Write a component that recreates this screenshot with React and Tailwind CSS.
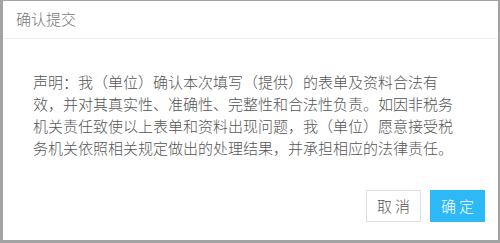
import React from "react";

const font = { fontFamily: '"Noto Sans CJK SC", "Noto Sans", sans-serif' };

export default function App() {
  return (
    <div
      className="w-[500px] h-[243px] bg-[#a3a3a3] pt-[1px] pl-[3px] pr-[2px] pb-[3px]"
      style={font}
    >
      <div className="h-full bg-white flex flex-col">
        <div className="h-[38px] shrink-0 flex items-center px-[13px] border-b border-[#f0f0f0] text-[15px] font-light text-[#777]">
          确认提交
        </div>
        <div className="pt-[32px] pl-[30px] pr-[42px] text-[15px] leading-[22px] font-light text-[#555]">
          声明：我（单位）确认本次填写（提供）的表单及资料合法有效，并对其真实性、准确性、完整性和合法性负责。如因非税务机关责任致使以上表单和资料出现问题，我（单位）愿意接受税务机关依照相关规定做出的处理结果，并承担相应的法律责任。
        </div>
        <div className="mt-auto flex justify-end gap-[9px] pr-[13px] pb-[18px]">
          <button className="w-[55px] h-[32px] border border-[#e0e0e0] bg-white text-[15px] font-light text-[#555] tracking-[3px] pl-[3px]">
            取消
          </button>
          <button className="w-[55px] h-[32px] bg-[#2db8f6] text-[15px] font-light text-white tracking-[3px] pl-[3px]">
            确定
          </button>
        </div>
      </div>
    </div>
  );
}
